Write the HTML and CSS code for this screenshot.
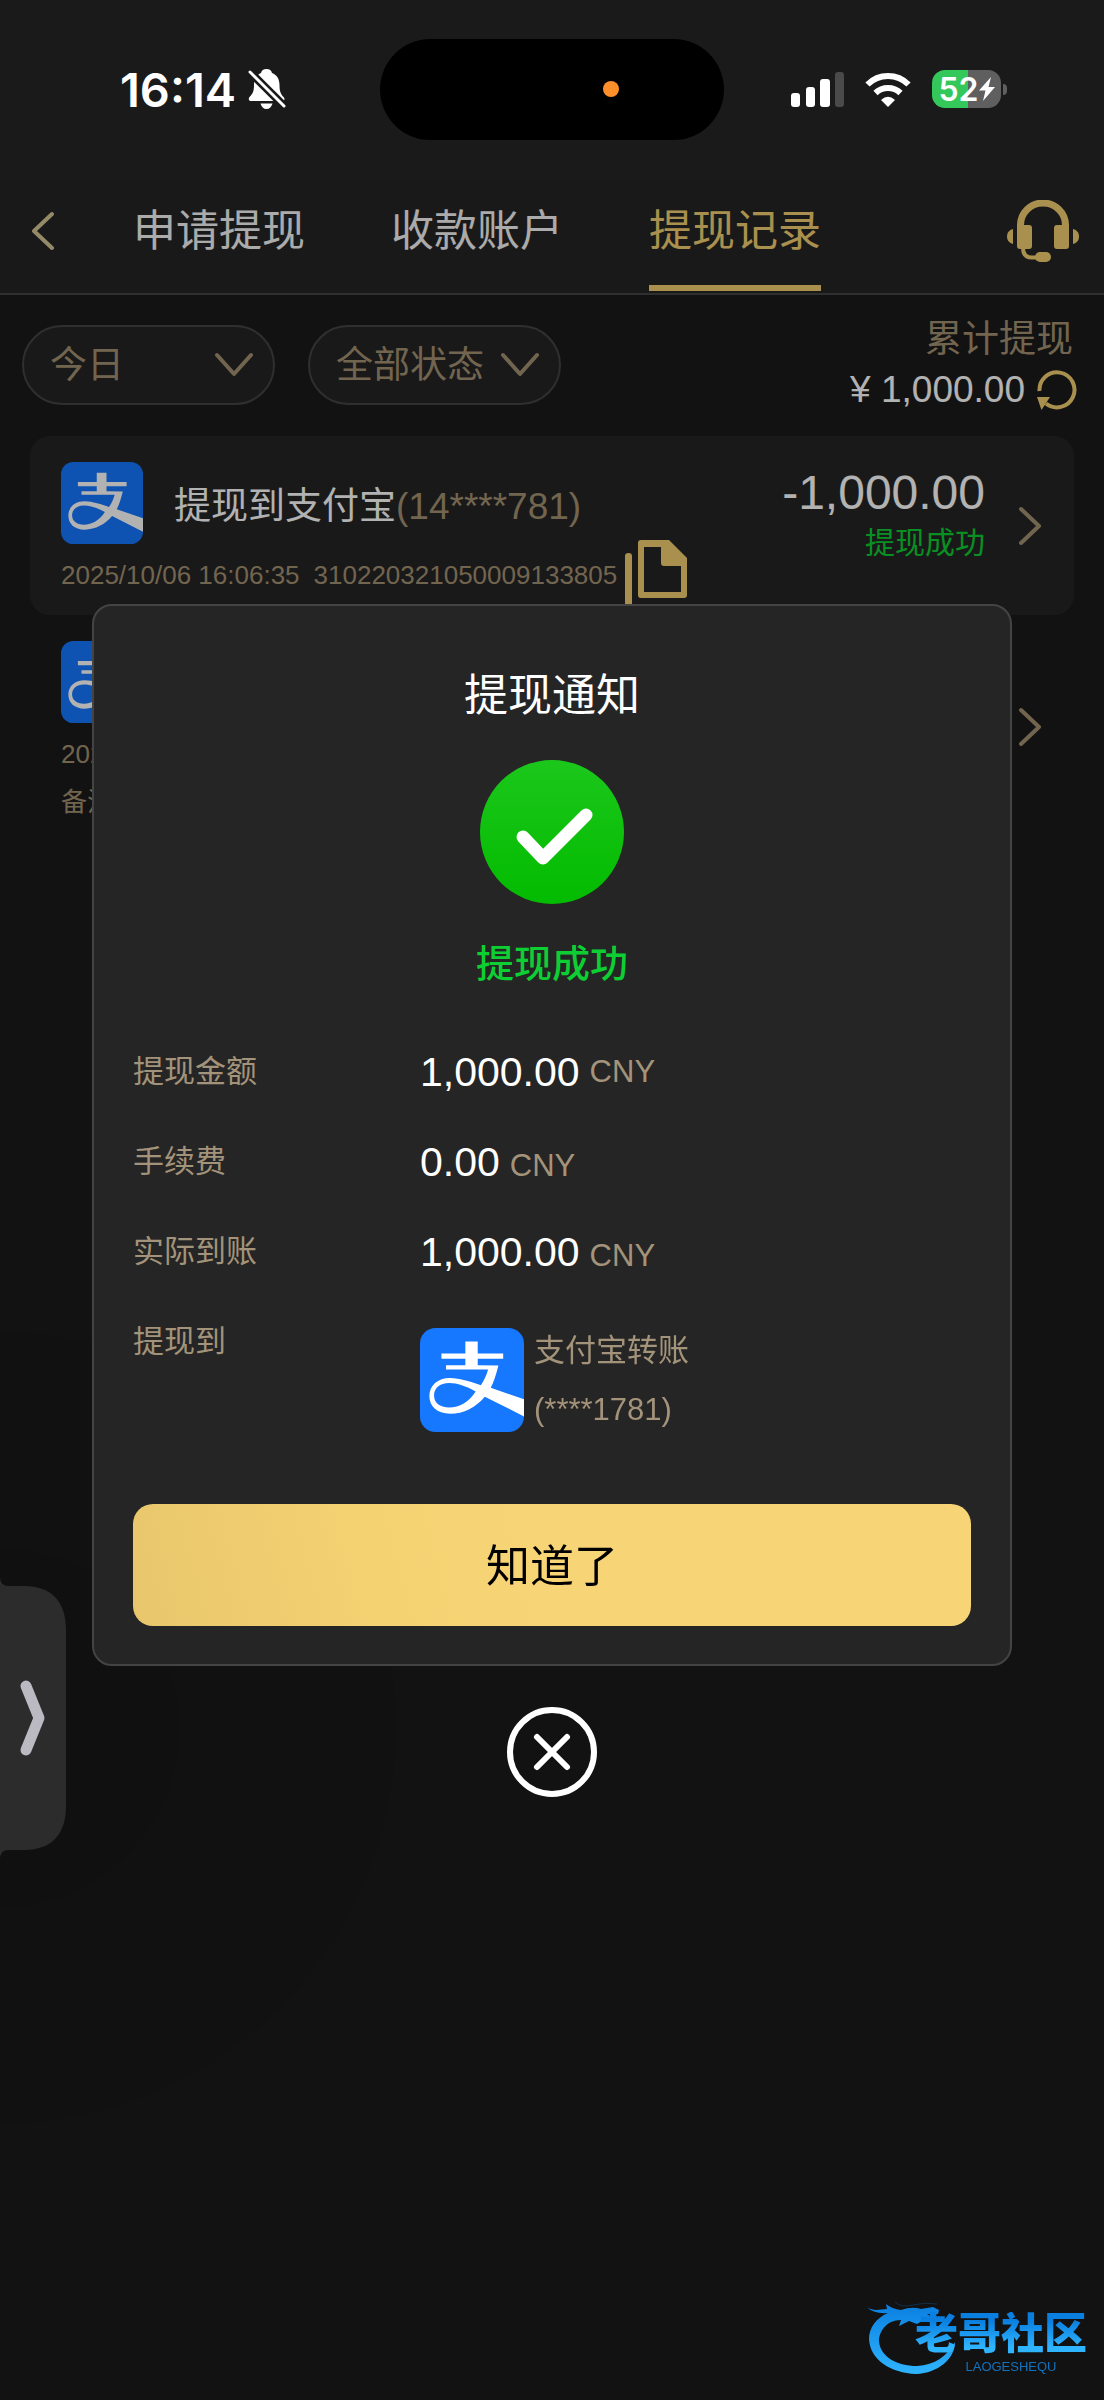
FILE: index.html
```
<!DOCTYPE html>
<html lang="zh-CN">
<head>
    <meta charset="UTF-8">
    <meta name="viewport" content="width=device-width, initial-scale=1.0">
    <title>提现记录</title>
    <link rel="stylesheet" href="styles.css">
</head>
<body>
    <!-- Shared icons -->
    <svg class="sprite" aria-hidden="true">
        <symbol id="alipay" viewBox="0 0 100 100">
            <rect width="100" height="100" rx="15" fill="#1677ff"/>
            <path fill="#fff" fill-rule="evenodd" d="M75.4 36C73 45 71 52 68 57.5L100 68.5V85L62.3 66C54 76 42 82.5 29 82.5C16 82.5 9 75 9 65.500C9 55 17 48 29 48C38 48 50 52 58.500 55C62 50 64 45 65.500 40H25V35.700H43.600V29.500H20.600V24.400H43.600V13H55.500V24.400H80V29.500H55.500V35.700ZM53.500 61C44 56 36 53 28 53C19 53 13.500 58 13.500 65C13.500 72 19 76.500 28 76.500C38 76.500 47 71 53.500 61Z"/>
        </symbol>
        <symbol id="chevron-right" viewBox="0 0 24 40">
            <path d="M2 3L20 20L2 37" fill="none" stroke="currentColor" stroke-width="4" stroke-linecap="round" stroke-linejoin="round"/>
        </symbol>
        <symbol id="chevron-down" viewBox="0 0 38 26">
            <path d="M2 3L19 22L36 3" fill="none" stroke="currentColor" stroke-width="4" stroke-linecap="round" stroke-linejoin="round"/>
        </symbol>
    </svg>

    <!-- Phone status bar -->
    <div class="status-bar">
        <div class="status-left">
            <span class="clock">16:14</span>
            <svg class="bell" viewBox="0 0 38 40" fill="#fff">
                <path d="M18.500 0C21.500 0 23.500 1.500 24 4C29 6 31.500 10 31.500 16C31.500 22 32.500 25 36 28.500C37 30 36.500 32 34.500 32H3C1 32 0 30 1.500 28C5 24.500 6 22 6 16C6 10 8.500 6 13 4C13.500 1.500 15.500 0 18.500 0Z"/>
                <path d="M12.500 34.500H24.500C23.500 38 21.500 40 18.500 40S13.500 38 12.500 34.500Z"/>
                <path d="M1 2L37 38" stroke="#1a1a1a" stroke-width="8"/>
                <path d="M2 3L36 37" stroke="#fff" stroke-width="3" stroke-linecap="round"/>
            </svg>
        </div>
        <div class="island"><span class="mic-dot"></span></div>
        <div class="status-right">
            <svg class="signal" viewBox="0 0 53 35" fill="#fff">
                <rect x="0" y="21" width="9" height="14" rx="3"/>
                <rect x="15" y="15" width="9" height="20" rx="3"/>
                <rect x="29" y="7" width="10" height="28" rx="3"/>
                <rect x="44" y="0" width="9" height="35" rx="3" fill="#4a4a4a"/>
            </svg>
            <svg class="wifi" viewBox="0 0 46 35" fill="none" stroke="#fff" stroke-width="6">
                <path d="M2.500 12.500A29 29 0 0 1 43.500 12.500"/>
                <path d="M10.500 21A18 18 0 0 1 35.500 21"/>
                <path d="M23 35L16 28Q23 21.500 30 28Z" fill="#fff" stroke="none"/>
            </svg>
            <div class="battery">
                <span>52</span>
                <svg viewBox="0 0 16 24"><path d="M12 0L0 13.500H6.500L4 24L16 10H9.500Z" fill="#fff"/></svg>
            </div>
        </div>
    </div>

    <header class="header">
        <button class="back" aria-label="返回"><svg viewBox="0 0 24 40"><use href="#chevron-right"/></svg></button>
        <nav class="tabs">
            <a href="#">申请提现</a>
            <a href="#">收款账户</a>
            <a href="#" class="active">提现记录</a>
        </nav>
        <button class="service" aria-label="客服">
            <svg viewBox="0 0 72 62" fill="currentColor">
                <path d="M13.500 30V25a22.500 22 0 0 1 45 0v5" fill="none" stroke="currentColor" stroke-width="7"/>
                <rect x="10" y="25" width="15" height="24" rx="3"/>
                <rect x="47" y="25" width="15" height="24" rx="3"/>
                <path d="M6 29V44C2 43 0 40 0 36.500S2 30 6 29Z"/>
                <path d="M66 29V44C70 43 72 40 72 36.500S70 30 66 29Z"/>
                <path d="M16 48C16 54 19 57.500 25 57.500H32" fill="none" stroke="currentColor" stroke-width="4"/>
                <rect x="28" y="52" width="16" height="10" rx="5"/>
            </svg>
        </button>
    </header>

    <main>
        <div class="filter-bar">
            <div class="filter">
                <select aria-label="日期"><option>今日</option></select>
                <svg><use href="#chevron-down"/></svg>
            </div>
            <div class="filter">
                <select aria-label="状态"><option>全部状态</option></select>
                <svg><use href="#chevron-down"/></svg>
            </div>
            <div class="total">
                <p class="total-label">累计提现</p>
                <p class="total-amount">
                    <span>¥ 1,000.00</span>
                    <button class="refresh" aria-label="刷新">
                        <svg viewBox="0 0 40 40">
                            <path d="M2.500 21A17.500 17.500 0 1 1 9 33.500" fill="none" stroke="currentColor" stroke-width="4"/>
                            <path d="M0 27H13L4.500 40Z" fill="currentColor"/>
                        </svg>
                    </button>
                </p>
            </div>
        </div>

        <ul class="records">
            <li class="record">
                <div class="record-info">
                    <div class="record-title">
                        <svg class="pay-icon"><use href="#alipay"/></svg>
                        <p>提现到支付宝<span>(14****781)</span></p>
                    </div>
                    <div class="record-meta">
                        <span>2025/10/06 16:06:35</span>
                        <span>310220321050009133805</span>
                        <button class="copy" aria-label="复制">
                            <svg viewBox="0 0 62 74" fill="currentColor">
                                <path d="M0 16Q0 13 3.500 13T7 16V67H48V74H3Q0 74 0 71Z"/>
                                <path fill-rule="evenodd" d="M16 0H44L62 18V55Q62 58 59 58H16Q13 58 13 55V3Q13 0 16 0ZM19 7V52H56V26H39Q36 26 36 23V7Z"/>
                            </svg>
                        </button>
                    </div>
                </div>
                <div class="record-amount">
                    <strong>-1,000.00</strong>
                    <span>提现成功</span>
                </div>
                <svg class="arrow"><use href="#chevron-right"/></svg>
            </li>
            <li class="record">
                <div class="record-info">
                    <div class="record-title">
                        <svg class="pay-icon"><use href="#alipay"/></svg>
                    </div>
                    <div class="record-meta"><span>2025/10/06</span></div>
                    <div class="record-meta"><span>备注</span></div>
                </div>
                <svg class="arrow"><use href="#chevron-right"/></svg>
            </li>
        </ul>
    </main>

    <!-- Withdrawal notice -->
    <div class="overlay">
        <section class="modal" role="dialog" aria-labelledby="modal-title">
            <h2 id="modal-title">提现通知</h2>
            <svg class="success-icon" viewBox="0 0 144 144">
                <defs>
                    <linearGradient id="green" x2="0" y2="1">
                        <stop offset="0" stop-color="#1bc71b"/>
                        <stop offset="1" stop-color="#03bb00"/>
                    </linearGradient>
                </defs>
                <circle cx="72" cy="72" r="72" fill="url(#green)"/>
                <path d="M43 77L63 98L106 55" fill="none" stroke="#fff" stroke-width="13" stroke-linecap="round" stroke-linejoin="round"/>
            </svg>
            <p class="result">提现成功</p>
            <dl class="details">
                <dt>提现金额</dt>
                <dd class="centered"><b>1,000.00</b> <span>CNY</span></dd>
                <dt>手续费</dt>
                <dd><b>0.00</b> <span>CNY</span></dd>
                <dt>实际到账</dt>
                <dd><b>1,000.00</b> <span>CNY</span></dd>
                <dt>提现到</dt>
                <dd class="account">
                    <svg><use href="#alipay"/></svg>
                    <p>支付宝转账<br>(****1781)</p>
                </dd>
            </dl>
            <button class="confirm">知道了</button>
        </section>
        <button class="close" aria-label="关闭">
            <svg viewBox="0 0 90 90" fill="none" stroke="#fff" stroke-width="6" stroke-linecap="round">
                <circle cx="45" cy="45" r="42"/>
                <path d="M30 30L60 60M60 30L30 60"/>
            </svg>
        </button>
    </div>

    <button class="side-tab" aria-label="展开">
        <svg viewBox="0 0 66 280">
            <path d="M0 0Q1 8 8 8H24C52 8 66 24 66 52V228C66 256 52 272 24 272H8Q1 272 0 280Z" fill="#2c2c2c"/>
            <path d="M26 108L39 140L26 172" fill="none" stroke="#bbbac2" stroke-width="11" stroke-linecap="round" stroke-linejoin="round"/>
        </svg>
    </button>

    <div class="watermark">
        <svg viewBox="0 0 90 76">
            <defs>
                <linearGradient id="blue" x2="0" y2="1">
                    <stop offset="0" stop-color="#0a7fe0"/>
                    <stop offset="1" stop-color="#2fb4ff"/>
                </linearGradient>
            </defs>
            <path fill="url(#blue)" d="M0 9C7 14 13 11 20 11L19 6Q25 11 34 12Q45 8 54 11L66 9L72 12L71 16H60L70 22L68 25L55 23L50 26L42 23L32 28L34 22C19 22 12 34 12 43C13 58 29 68 50 68C68 67 80 58 88 44C88 61 71 75 49 76C24 75 3 62 2 41C2 30 9 20 21 15Q6 16 0 9Z"/>
            <path fill="none" stroke="#12304a" d="M28 4Q34 10 46 7T70 6"/>
        </svg>
        <div class="watermark-text">
            <b>老哥社区</b>
            <small>LAOGESHEQU</small>
        </div>
    </div>
</body>
</html>
```
FILE: styles.css
```
/* Global Settings */
* {
    box-sizing: border-box;
    margin: 0;
    padding: 0;
}

body {
    min-height: 100vh;
    background-color: #1b1b1b;
    color: #fff;
    font-family: 'Liberation Sans', 'Noto Sans CJK SC', sans-serif;
    font-size: 37px;
}

button,
select {
    background: none;
    border: none;
    color: inherit;
    font: inherit;
    cursor: pointer;
}

svg {
    display: block;
    flex-shrink: 0;
}

.sprite {
    position: absolute;
    width: 0;
    height: 0;
}

/* Status bar */
.status-bar {
    position: relative;
    z-index: 3;
    display: grid;
    grid-template-columns: 1fr auto 1fr;
    align-items: center;
    height: 178px;
    padding: 0 97px 0 120px;
    background-color: #1a1a1a;
    font-family: 'Inter', sans-serif;
}

.status-left,
.status-right {
    display: flex;
    align-items: center;
}

.status-left {
    gap: 12px;
}

.clock {
    font-size: 47px;
    font-weight: 600;
}

.bell {
    width: 38px;
    height: 40px;
}

.island {
    display: flex;
    justify-content: flex-end;
    align-items: center;
    width: 344px;
    height: 101px;
    margin-right: 24px;
    padding-right: 105px;
    border-radius: 51px;
    background-color: #000;
}

.mic-dot {
    width: 16px;
    height: 16px;
    border-radius: 50%;
    background-color: #ff8f2a;
}

.status-right {
    justify-content: flex-end;
    gap: 21px;
}

.signal {
    width: 53px;
    height: 35px;
}

.wifi {
    width: 46px;
    height: 35px;
}

.battery {
    position: relative;
    display: flex;
    align-items: center;
    justify-content: center;
    width: 69px;
    height: 38px;
    margin-right: 6px;
    border-radius: 13px;
    background: linear-gradient(90deg, #34c759 52%, #5f5f5f 52%);
    font-size: 32px;
    font-weight: 600;
}

.battery::after {
    content: "";
    position: absolute;
    right: -6px;
    width: 4px;
    height: 11px;
    border-radius: 0 4px 4px 0;
    background-color: #5f5f5f;
}

.battery svg {
    width: 16px;
    height: 24px;
}

/* Header */
.header {
    display: flex;
    align-items: center;
    padding: 0 25px;
    border-bottom: 2px solid #444;
    background-color: #252525;
}

.back,
.service {
    margin-bottom: 9px;
}

.back {
    width: 108px;
    padding-left: 5px;
    color: #d6c694;
}

.back svg {
    width: 24px;
    height: 40px;
    transform: rotate(180deg);
}

.tabs {
    display: flex;
    flex: 1;
    gap: 86px;
}

.tabs a {
    margin-bottom: 2px;
    border-bottom: 6px solid transparent;
    color: #f5f5f5;
    font-size: 43px;
    line-height: 107px;
    text-decoration: none;
}

.tabs .active {
    border-color: #f3cf70;
    color: #f3cf70;
}

.service {
    color: #f3cf70;
}

.service svg {
    width: 72px;
    height: 62px;
}

/* Filters */
.filter-bar {
    display: flex;
    align-items: center;
    gap: 33px;
    padding: 20px 27px 21px 22px;
}

.filter {
    position: relative;
    width: 253px;
    color: #a49172;
}

.filter select {
    width: 100%;
    height: 80px;
    padding: 0 26px;
    border: 2px solid #444;
    border-radius: 40px;
    background-color: #252525;
    appearance: none;
}

.filter svg {
    position: absolute;
    top: 27px;
    right: 22px;
    width: 38px;
    height: 26px;
    pointer-events: none;
}

.total {
    margin-left: auto;
    line-height: 50px;
    text-align: right;
}

.total-label {
    padding-right: 4px;
    color: #a49172;
}

.total-amount {
    display: flex;
    align-items: center;
    gap: 12px;
}

.refresh {
    color: #f3cf70;
}

.refresh svg {
    width: 40px;
    height: 40px;
}

/* Records */
.records {
    padding: 0 30px;
    list-style: none;
}

.record {
    display: flex;
    align-items: flex-start;
    padding: 17px 31px;
    border-radius: 20px;
}

.record:nth-child(odd) {
    background-color: #252525;
}

.record-info {
    flex: 1;
    padding-top: 9px;
}

.record-title {
    display: flex;
    align-items: center;
    gap: 31px;
    margin-bottom: 9px;
}

.record-title span,
.record-meta {
    color: #a49172;
}

.pay-icon {
    width: 82px;
    height: 82px;
}

.record-meta {
    display: flex;
    align-items: center;
    gap: 14px;
    height: 45px;
    font-size: 26px;
}

.copy {
    align-self: flex-start;
    margin: -13px 0 0 -6px;
    color: #f3cf70;
}

.copy svg {
    width: 62px;
    height: 74px;
}

.record-amount {
    display: flex;
    flex-direction: column;
    align-items: flex-end;
    padding-top: 12px;
}

.record-amount strong {
    font-size: 48px;
    font-weight: 400;
    line-height: 56px;
}

.record-amount span {
    color: #0dcf33;
    font-size: 30px;
    line-height: 44px;
}

.arrow {
    align-self: center;
    width: 24px;
    height: 40px;
    margin-left: 34px;
    color: #a49172;
}

/* Modal */
.overlay {
    position: fixed;
    inset: 0;
    z-index: 2;
    display: flex;
    flex-direction: column;
    align-items: center;
    justify-content: center;
    gap: 41px;
    background: radial-gradient(circle at 0 72%, rgba(0, 0, 0, 0.4), rgba(0, 0, 0, 0.3) 600px);
}

.modal {
    display: flex;
    flex-direction: column;
    align-items: center;
    width: calc(100% - 184px);
    padding: 56px 39px 38px;
    border: 2px solid #444;
    border-radius: 20px;
    background-color: #252525;
}

.modal h2 {
    font-size: 44px;
    font-weight: 400;
    line-height: 68px;
}

.success-icon {
    width: 144px;
    height: 144px;
    margin: 30px 0;
}

.result {
    color: #0dcf33;
    font-size: 38px;
    font-weight: 500;
    line-height: 60px;
}

.details {
    display: grid;
    grid-template-columns: 287px 1fr;
    grid-template-rows: repeat(3, 90px);
    align-self: stretch;
    margin: 33px 0 65px;
    color: #a3937a;
    font-size: 31px;
    line-height: 90px;
}

.details b {
    color: #fff;
    font-size: 41px;
    font-weight: 400;
}

.details dd {
    display: flex;
    align-items: baseline;
    gap: 10px;
}

.details .centered {
    align-items: center;
}

.details .account {
    align-items: center;
    padding-top: 24px;
    line-height: 59px;
}

.account svg {
    width: 104px;
    height: 104px;
}

.confirm {
    align-self: stretch;
    height: 122px;
    padding-bottom: 4px;
    border-radius: 20px;
    background: linear-gradient(75deg, #e8c66c, #f4d171 28%, #f7d475 50%);
    color: #000;
    font-size: 44px;
}

.close svg {
    width: 90px;
    height: 90px;
}

/* Floating items */
.side-tab {
    position: fixed;
    top: 1578px;
    left: 0;
    z-index: 4;
}

.side-tab svg {
    width: 66px;
    height: 280px;
}

.watermark {
    position: fixed;
    right: 17px;
    bottom: 26px;
    z-index: 4;
    display: flex;
    align-items: flex-end;
}

.watermark svg {
    width: 90px;
    height: 76px;
}

.watermark-text {
    display: flex;
    flex-direction: column;
    align-items: center;
    gap: 4px;
    margin-left: -42px;
}

.watermark b {
    background: linear-gradient(#0a7fe0 20%, #2fb4ff 80%);
    background-clip: text;
    color: transparent;
    font-size: 43px;
    font-weight: 900;
    line-height: 44px;
}

.watermark small {
    padding-left: 20px;
    color: #1472bd;
    font-size: 13px;
    line-height: 14px;
}
```
